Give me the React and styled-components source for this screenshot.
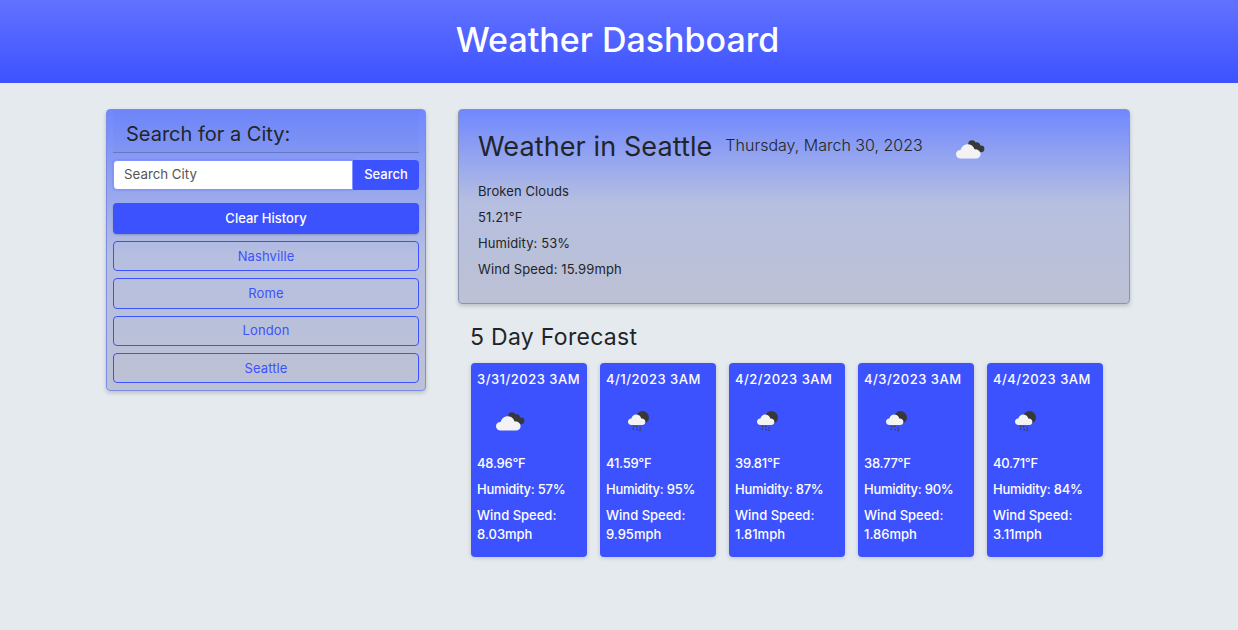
import React from 'react';
import styled, { createGlobalStyle } from 'styled-components';

const GlobalStyle = createGlobalStyle`
  html, body {
    margin: 0;
    padding: 0;
    background: #e5eaee;
    font-family: Inter, "Noto Sans", sans-serif;
    color: #212529;
  }
`;

const cities = ['Nashville', 'Rome', 'London', 'Seattle'];

const forecast = [
  { date: '3/31/2023 3AM', icon: 'broken', temp: '48.96°F', humidity: '57%', wind: '8.03mph' },
  { date: '4/1/2023 3AM', icon: 'rain', temp: '41.59°F', humidity: '95%', wind: '9.95mph' },
  { date: '4/2/2023 3AM', icon: 'rain', temp: '39.81°F', humidity: '87%', wind: '1.81mph' },
  { date: '4/3/2023 3AM', icon: 'rain', temp: '38.77°F', humidity: '90%', wind: '1.86mph' },
  { date: '4/4/2023 3AM', icon: 'rain', temp: '40.71°F', humidity: '84%', wind: '3.11mph' }
];

const BrokenClouds = () => (
  <svg width="29" height="19" viewBox="0 0 29 19">
    <circle cx="16" cy="4" r="3.8" fill="#383838" />
    <circle cx="20.5" cy="6" r="3.8" fill="#383838" />
    <circle cx="25" cy="8.8" r="3.4" fill="#383838" />
    <path d="M5 18.5 C1.6 18.5 0 16.4 0 14.2 C0 11.6 2 9.8 4.6 9.9 C5.8 6.2 8.8 4 12 4.2 C15.6 4.4 18 7 18.6 9.6 C21.6 9.2 24.6 11.2 24.6 14.2 C24.6 16.8 22.6 18.5 20 18.5 Z" fill="#f3f3f3" />
  </svg>
);

const RainClouds = () => (
  <svg width="22" height="21" viewBox="0 0 22 21">
    <circle cx="14.5" cy="6.5" r="6.5" fill="#383838" />
    <path d="M3.6 14 C1.2 14 0 12.6 0 10.8 C0 8.9 1.4 7.5 3.3 7.6 C4.2 4.8 6.3 3.4 8.6 3.6 C11.2 3.8 12.8 5.6 13.2 7.6 C15.6 7.4 17.4 8.9 17.4 11 C17.4 12.8 16 14 14.2 14 Z" fill="#f3f3f3" />
    <g fill="#383838">
      <rect x="5" y="14.8" width="1.3" height="1.3" />
      <rect x="8" y="15" width="1.3" height="1.3" />
      <rect x="4.5" y="17.4" width="1.3" height="1.3" />
      <rect x="8.6" y="18" width="1.3" height="1.3" />
      <rect x="11.5" y="16.4" width="1.3" height="1.3" />
      <rect x="11.4" y="18.8" width="1.3" height="1.3" />
    </g>
  </svg>
);

const App = () => (
  <>
    <GlobalStyle />
    <Header>
      <HeaderTitle>Weather Dashboard</HeaderTitle>
    </Header>
    <Page>
      <Sidebar>
        <SidebarTitle>Search for a City:</SidebarTitle>
        <SearchRow>
          <SearchInput placeholder="Search City" />
          <SearchButton>Search</SearchButton>
        </SearchRow>
        <ClearButton>Clear History</ClearButton>
        <CityList>
          {cities.map((city) => (
            <CityButton key={city}>{city}</CityButton>
          ))}
        </CityList>
      </Sidebar>
      <Main>
        <CurrentPanel>
          <CurrentHead>
            <CurrentTitle>Weather in Seattle</CurrentTitle>
            <CurrentDate>Thursday, March 30, 2023</CurrentDate>
            <CurrentIcon><BrokenClouds /></CurrentIcon>
          </CurrentHead>
          <CurrentLine>Broken Clouds</CurrentLine>
          <CurrentLine>51.21°F</CurrentLine>
          <CurrentLine>Humidity: 53%</CurrentLine>
          <CurrentLine>Wind Speed: 15.99mph</CurrentLine>
        </CurrentPanel>
        <ForecastTitle>5 Day Forecast</ForecastTitle>
        <CardRow>
          {forecast.map((day) => (
            <Card key={day.date}>
              <CardDate>{day.date}</CardDate>
              <CardIcon $big={day.icon === 'broken'}>
                {day.icon === 'broken' ? <BrokenClouds /> : <RainClouds />}
              </CardIcon>
              <CardLine $tight>{day.temp}</CardLine>
              <CardLine $tight>Humidity: {day.humidity}</CardLine>
              <CardLine>Wind Speed: {day.wind}</CardLine>
            </Card>
          ))}
        </CardRow>
      </Main>
    </Page>
  </>
);

export default App;

const Header = styled.header`
  height: 83px;
  box-sizing: border-box;
  padding: 0 3px 5px 0;
  display: flex;
  align-items: center;
  justify-content: center;
  background: linear-gradient(180deg, #6272ff 0%, #3d52ff 100%);
`;

const HeaderTitle = styled.h1`
  margin: 0;
  color: #fff;
  font-size: 34px;
  font-weight: 500;
`;

const Page = styled.div`
  display: flex;
  align-items: flex-start;
  gap: 32px;
  padding: 26px 108px 0 106px;
  height: 521px;
`;

const Sidebar = styled.aside`
  width: 320px;
  height: 282px;
  box-sizing: border-box;
  flex: none;
  padding: 0 6px;
  border: 1px solid #7a8ce8;
  border-radius: 4px;
  background: linear-gradient(180deg, #7088ff 0%, #b6bfe0 52%, #bdc1d4 100%);
  box-shadow: 0 2px 4px rgba(0, 0, 0, 0.18);
`;

const SidebarTitle = styled.h2`
  margin: 0;
  height: 43px;
  box-sizing: border-box;
  padding: 12px 13px 0;
  font-size: 20px;
  line-height: 24px;
  font-weight: 400;
  background: rgba(0, 0, 0, 0.02);
  border-bottom: 1px solid rgba(0, 0, 0, 0.2);
`;

const SearchRow = styled.div`
  display: flex;
  margin-top: 7px;
  height: 30px;
`;

const SearchInput = styled.input`
  flex: 1;
  min-width: 0;
  box-sizing: border-box;
  padding: 0 10px 2px;
  border: 1px solid #8494ff;
  border-radius: 4px 0 0 4px;
  background: #fff;
  font-family: inherit;
  font-size: 13.3px;
  outline: none;
  box-shadow: 0 0 2px rgba(61, 82, 255, 0.5);

  &::placeholder {
    color: #555;
  }
`;

const SearchButton = styled.button`
  width: 66px;
  padding: 0 0 2px;
  border: none;
  border-radius: 0 4px 4px 0;
  background: #3d52ff;
  color: #fff;
  font-family: inherit;
  font-size: 13px;
  font-weight: 500;
`;

const ClearButton = styled.button`
  display: block;
  width: 100%;
  height: 31px;
  margin-top: 13px;
  padding: 0 0 2px;
  border: none;
  border-radius: 4px;
  background: #3d52ff;
  color: #fff;
  font-family: inherit;
  font-size: 13px;
  font-weight: 500;
  box-shadow: 0 1px 2px rgba(0, 0, 0, 0.2);
`;

const CityList = styled.div`
  display: flex;
  flex-direction: column;
  gap: 7px;
  margin-top: 7px;
`;

const CityButton = styled.button`
  height: 30.33px;
  padding: 0 0 1px;
  border: 1px solid #3d52ff;
  border-radius: 4px;
  background: transparent;
  color: #3d52ff;
  font-family: inherit;
  font-size: 13px;
  letter-spacing: 0.1px;
`;

const Main = styled.main`
  flex: 1;
  min-width: 0;
`;

const CurrentPanel = styled.section`
  height: 195px;
  box-sizing: border-box;
  padding: 19px 19px;
  border: 1px solid #8b93b5;
  border-radius: 4px;
  background: linear-gradient(180deg, #7088ff 0%, #b6bfe0 48%, #bdc1d4 100%);
  box-shadow: 0 2px 4px rgba(0, 0, 0, 0.18);
`;

const CurrentHead = styled.div`
  display: flex;
  align-items: center;
  height: 34px;
  margin-bottom: 19px;
`;

const CurrentTitle = styled.h2`
  margin: 0;
  font-size: 27px;
  font-weight: 400;
  letter-spacing: 0.1px;
  white-space: nowrap;
`;

const CurrentDate = styled.span`
  margin: 0 0 2px 13px;
  font-size: 16px;
  font-weight: 300;
  white-space: nowrap;
`;

const CurrentIcon = styled.span`
  display: flex;
  margin-left: 33px;
  margin-top: 6px;
`;

const CurrentLine = styled.p`
  margin: 0 0 6.5px;
  font-size: 13px;
  line-height: 19.5px;
  letter-spacing: 0.1px;
`;

const ForecastTitle = styled.h3`
  margin: 18px 0 11px 12px;
  font-size: 23px;
  line-height: 30px;
  font-weight: 400;
  letter-spacing: 0.3px;
`;

const CardRow = styled.div`
  display: flex;
  gap: 13px;
  margin-left: 13px;
`;

const Card = styled.article`
  width: 116px;
  height: 194px;
  box-sizing: border-box;
  padding: 7px 6px;
  border-radius: 4px;
  background: #3d52ff;
  color: #fff;
  box-shadow: 0 1px 4px rgba(0, 0, 0, 0.18);
`;

const CardLine = styled.p`
  margin: 0 0 7px;
  font-size: 13px;
  line-height: 19px;
  font-weight: 500;
  letter-spacing: ${({ $tight }) => ($tight ? '-0.25px' : '0')};
`;

const CardDate = styled(CardLine)`
  letter-spacing: 0.5px;
`;

const CardIcon = styled.div`
  height: 50px;
  margin-bottom: 8px;
  display: flex;
  align-items: center;
  padding-left: ${({ $big }) => ($big ? '19px' : '22px')};
`;
